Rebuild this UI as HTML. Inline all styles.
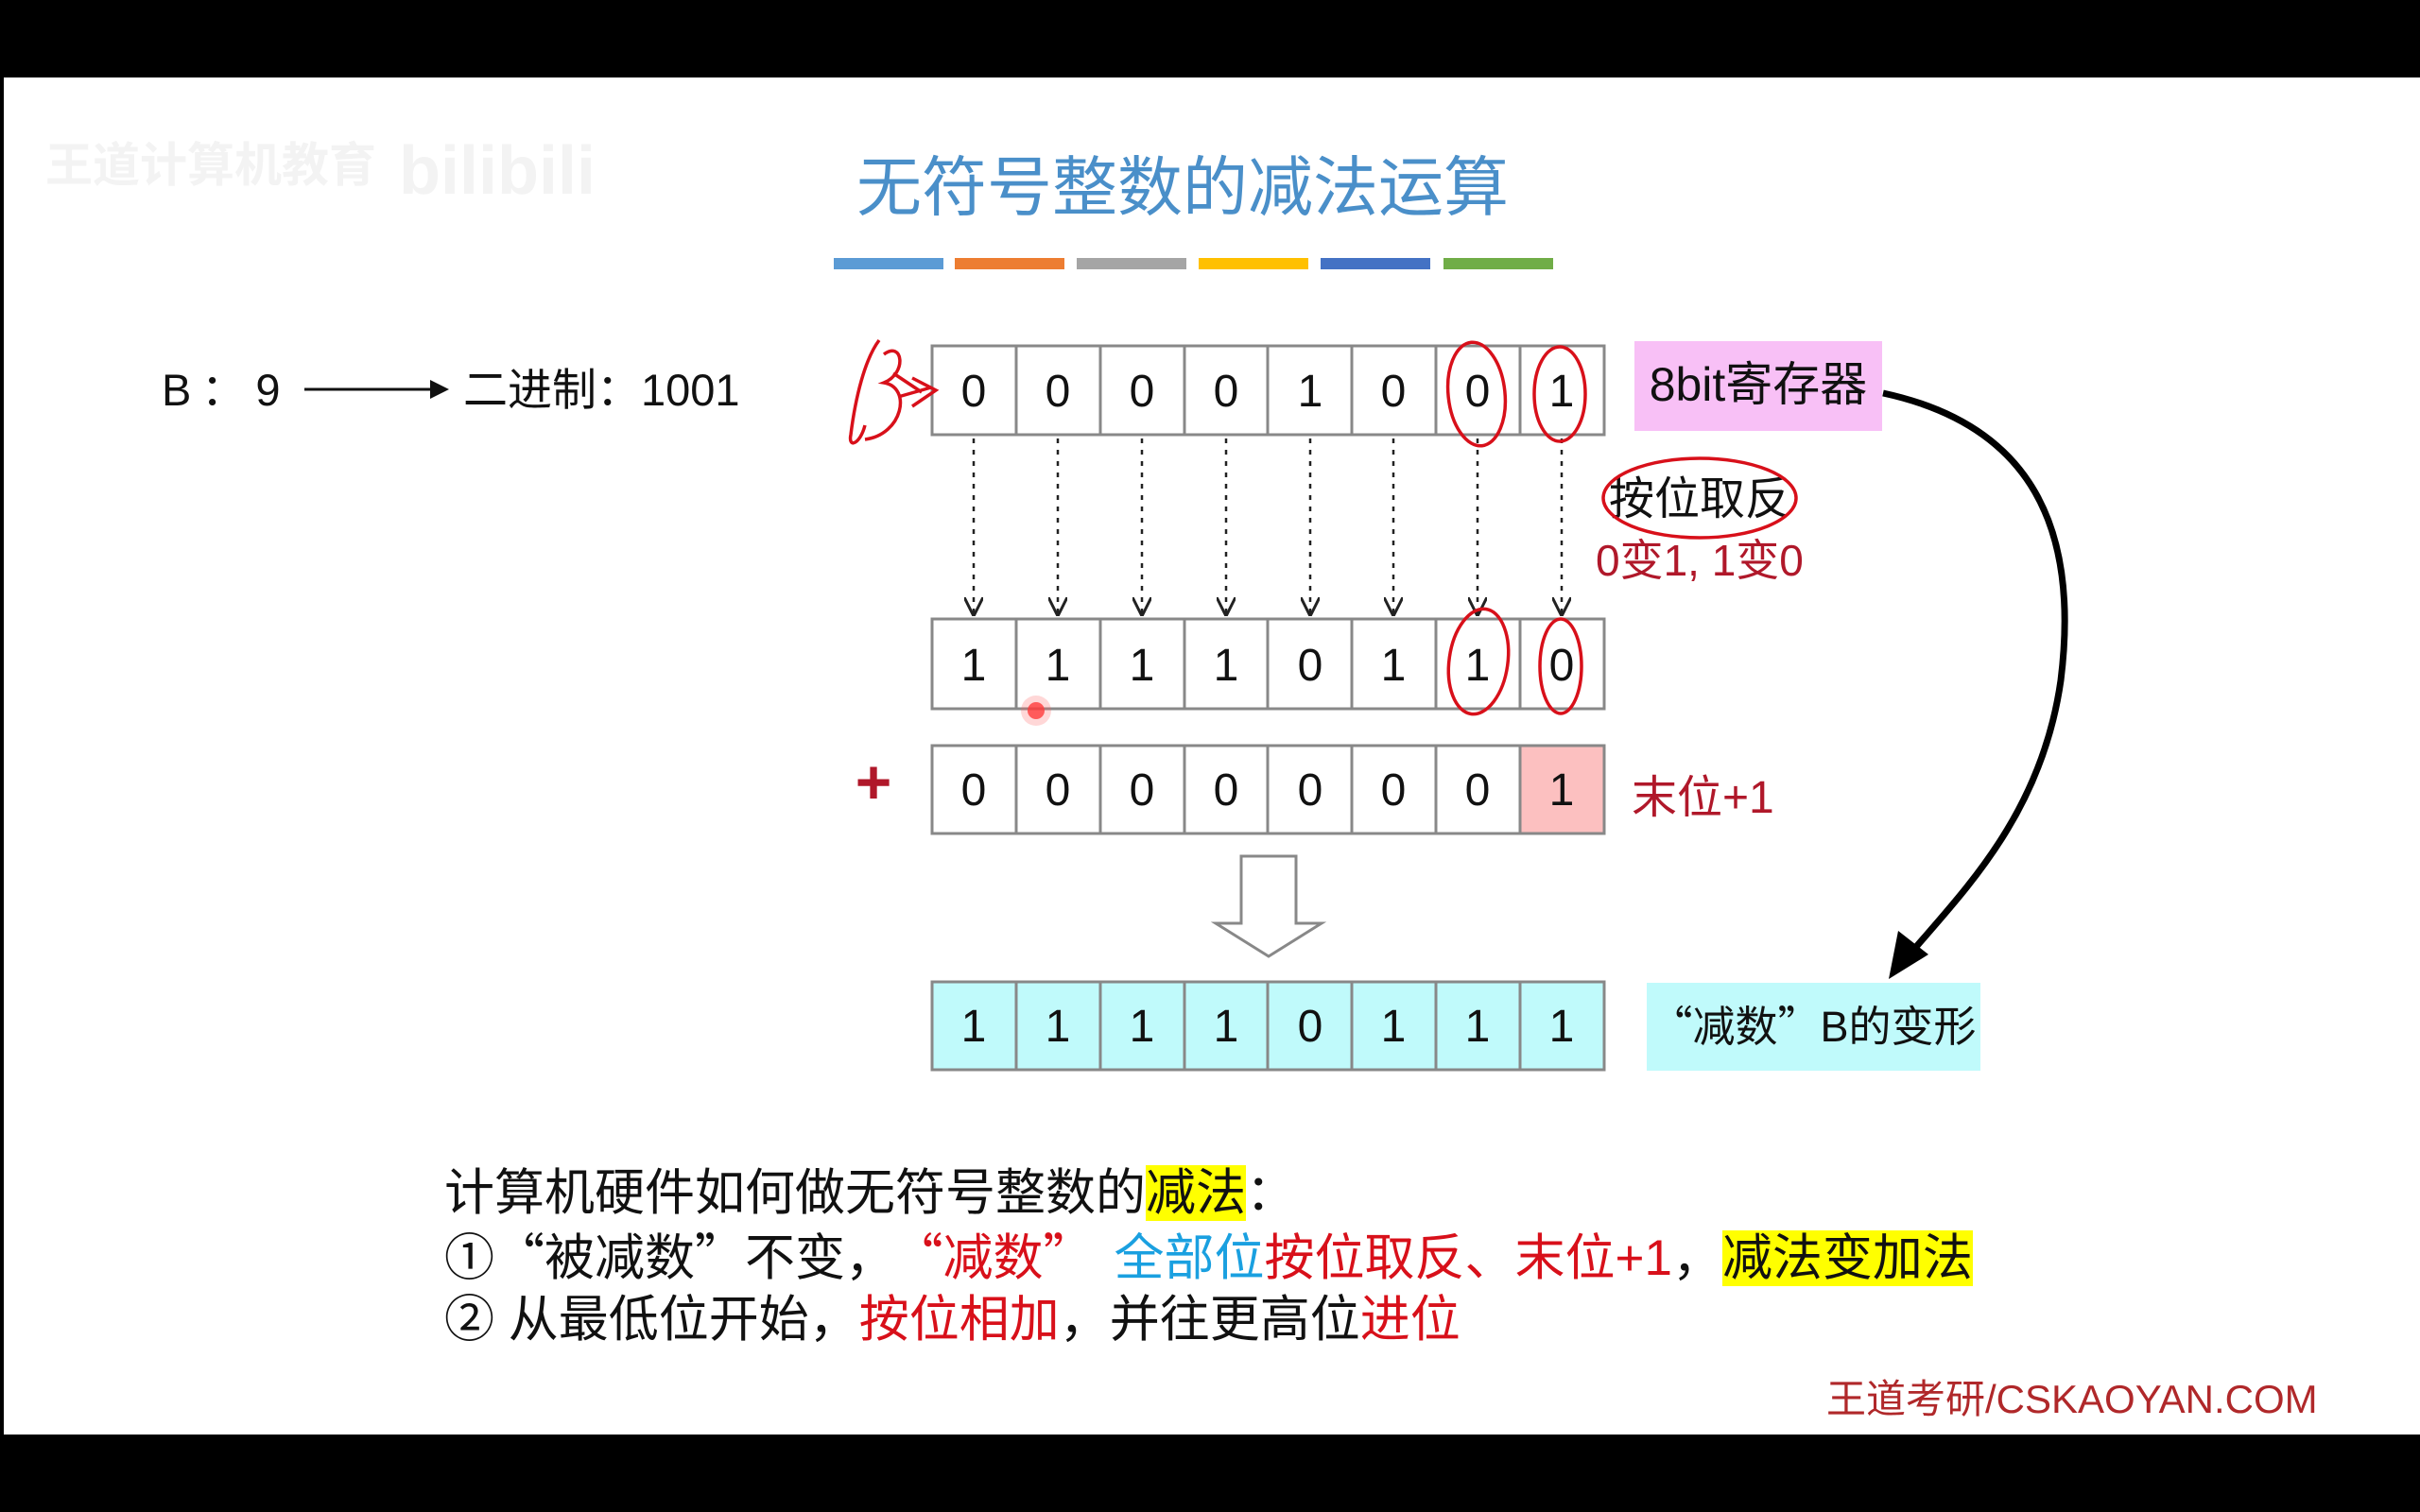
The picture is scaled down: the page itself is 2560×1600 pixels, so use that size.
<!DOCTYPE html>
<html><head><meta charset="utf-8"><style>
html,body{margin:0;padding:0;background:#000;}
svg{display:block}
text{font-family:"Liberation Sans","Noto Sans CJK SC",sans-serif;}
.q{font-family:"Noto Sans CJK SC",sans-serif;}
#bt{position:absolute;left:470px;top:1230px;font-family:"Liberation Sans","Noto Sans CJK SC",sans-serif;font-size:53px;line-height:65px;color:#111;white-space:nowrap;}
#bt .r{color:#d8101a}#bt .b{color:#1aa0e0}#bt .y{background:#ffff00}
#bt .q{font-family:"Noto Sans CJK SC",sans-serif;}
</style></head><body>
<svg width="2560" height="1600" viewBox="0 0 2560 1600" xmlns="http://www.w3.org/2000/svg">
<defs>
<marker id="ah" viewBox="0 0 10 10" refX="9" refY="5" markerWidth="8" markerHeight="8" orient="auto"><path d="M0,0 L10,5 L0,10" fill="none" stroke="#222" stroke-width="1.5"/></marker>
</defs>
<rect x="0" y="0" width="2560" height="1600" fill="#000"/>
<rect x="4" y="82" width="2556" height="1436" fill="#fff"/>
<text x="48" y="192" font-size="50" fill="#f3f3f3" font-weight="bold">王道计算机教育</text>
<text x="422" y="205" font-size="72" fill="#f3f3f3" font-weight="bold">bilibili</text>
<text x="1251" y="222" font-size="69" fill="#4a8fc9" text-anchor="middle">无符号整数的减法运算</text>
<g>
<rect x="882" y="273" width="116" height="12" fill="#5b9bd5"/>
<rect x="1010" y="273" width="116" height="12" fill="#ed7d31"/>
<rect x="1139" y="273" width="116" height="12" fill="#a5a5a5"/>
<rect x="1268" y="273" width="116" height="12" fill="#ffc000"/>
<rect x="1397" y="273" width="116" height="12" fill="#4472c4"/>
<rect x="1527" y="273" width="116" height="12" fill="#70ad47"/>
</g>
<text x="171" y="429" font-size="47" fill="#111">B<tspan class="q"> ： </tspan>9</text>
<line x1="322" y1="412" x2="460" y2="412" stroke="#111" stroke-width="3"/>
<path d="M455,402 L475,412 L455,422 Z" fill="#111"/>
<text x="490" y="429" font-size="47" fill="#111">二进制：1001</text>

<g stroke="#888" stroke-width="3" fill="#fff">
<rect x="986" y="366" width="711" height="94"/>
<rect x="986" y="655" width="711" height="95"/>
<rect x="986" y="789" width="711" height="93"/>
<rect x="1608" y="789" width="89" height="93" fill="#fcc0c0"/>
<rect x="986" y="1039" width="711" height="93" fill="#c0fafb"/>
</g>
<g stroke="#888" stroke-width="3">
<path d="M1075,366V460M1164,366V460M1253,366V460M1341,366V460M1430,366V460M1519,366V460M1608,366V460"/>
<path d="M1075,655V750M1164,655V750M1253,655V750M1341,655V750M1430,655V750M1519,655V750M1608,655V750"/>
<path d="M1075,789V882M1164,789V882M1253,789V882M1341,789V882M1430,789V882M1519,789V882M1608,789V882"/>
<path d="M1075,1039V1132M1164,1039V1132M1253,1039V1132M1341,1039V1132M1430,1039V1132M1519,1039V1132M1608,1039V1132"/>
</g>
<g font-size="48" fill="#111" text-anchor="middle">
<text x="1030" y="430">0</text><text x="1119" y="430">0</text><text x="1208" y="430">0</text><text x="1297" y="430">0</text><text x="1386" y="430">1</text><text x="1474" y="430">0</text><text x="1563" y="430">0</text><text x="1652" y="430">1</text>
<text x="1030" y="720">1</text><text x="1119" y="720">1</text><text x="1208" y="720">1</text><text x="1297" y="720">1</text><text x="1386" y="720">0</text><text x="1474" y="720">1</text><text x="1563" y="720">1</text><text x="1652" y="720">0</text>
<text x="1030" y="852">0</text><text x="1119" y="852">0</text><text x="1208" y="852">0</text><text x="1297" y="852">0</text><text x="1386" y="852">0</text><text x="1474" y="852">0</text><text x="1563" y="852">0</text><text x="1652" y="852">1</text>
<text x="1030" y="1102">1</text><text x="1119" y="1102">1</text><text x="1208" y="1102">1</text><text x="1297" y="1102">1</text><text x="1386" y="1102">0</text><text x="1474" y="1102">1</text><text x="1563" y="1102">1</text><text x="1652" y="1102">1</text>
</g>
<g stroke="#222" stroke-width="2.5" stroke-dasharray="5,7" marker-end="url(#ah)">
<line x1="1030" y1="464" x2="1030" y2="650"/><line x1="1119" y1="464" x2="1119" y2="650"/><line x1="1208" y1="464" x2="1208" y2="650"/><line x1="1297" y1="464" x2="1297" y2="650"/><line x1="1386" y1="464" x2="1386" y2="650"/><line x1="1474" y1="464" x2="1474" y2="650"/><line x1="1563" y1="464" x2="1563" y2="650"/><line x1="1652" y1="464" x2="1652" y2="650"/>
</g>
<rect x="1729" y="361" width="262" height="95" fill="#f8c0f6"/>
<text x="1860" y="424" font-size="50" fill="#111" text-anchor="middle">8bit寄存器</text>
<text x="1702" y="544" font-size="48" fill="#111">按位取反</text>
<ellipse cx="1798" cy="527" rx="102" ry="42" fill="none" stroke="#d8101a" stroke-width="3.5"/>
<text x="1688" y="609" font-size="46" fill="#b0182a">0变1, 1变0</text>
<text x="1726" y="860" font-size="48" fill="#b0182a">末位+1</text>
<text x="924" y="850" font-size="66" fill="#b0182a" font-weight="bold" text-anchor="middle">+</text>
<rect x="1742" y="1040" width="353" height="93" fill="#c0fafb"/>
<text x="1918" y="1102" font-size="45" fill="#111" text-anchor="middle"><tspan class="q">“</tspan>减数<tspan class="q">”</tspan>B的变形</text>
<path d="M1313,906 H1371 V977 H1398 L1342,1012 L1286,977 H1313 Z" fill="#fff" stroke="#888" stroke-width="3"/>
<path d="M1992,416 C2150,450 2200,560 2180,720 C2160,860 2080,940 2020,1010" fill="none" stroke="#000" stroke-width="7"/>
<path d="M1998,1036 L2008,985 L2040,1010 Z" fill="#000"/>
<g fill="none" stroke="#d8101a" stroke-width="3.5">
<ellipse cx="1562" cy="417" rx="30" ry="55" transform="rotate(-6 1562 417)"/>
<ellipse cx="1650" cy="417" rx="27" ry="50"/>
<ellipse cx="1564" cy="700" rx="31" ry="56" transform="rotate(8 1564 700)"/>
<ellipse cx="1651" cy="705" rx="22" ry="50"/>
<path d="M930,360 C915,380 905,420 900,460 C897,475 910,470 915,450 M935,375 C955,360 960,395 935,405 C965,410 955,460 915,465 M945,395 L975,415 M950,420 L985,410 M965,400 L990,413 L965,430"/>
</g>
<circle cx="1096" cy="752" r="9" fill="#ff3030" opacity="0.8"/>
<circle cx="1096" cy="752" r="16" fill="#ff6060" opacity="0.25"/>
<text x="1932" y="1495" font-size="42" fill="#b0282a">王道考研/CSKAOYAN.COM</text>
</svg>
<div id="bt">
<div>计算机硬件如何做无符号整数的<span class="y">减法</span>：</div>
<div>①<span class="q">“</span>被减数<span class="q">”</span>不变，<span class="r" style="margin-left:24px"><span class="q">“</span>减数<span class="q">”</span></span><span class="b" style="margin-left:22px">全部位</span><span class="r">按位取反、末位+1</span>，<span class="y">减法变加法</span></div>
<div>② 从最低位开始，<span class="r">按位相加</span>，并往更高位<span class="r">进位</span></div>
</div>
</body></html>
